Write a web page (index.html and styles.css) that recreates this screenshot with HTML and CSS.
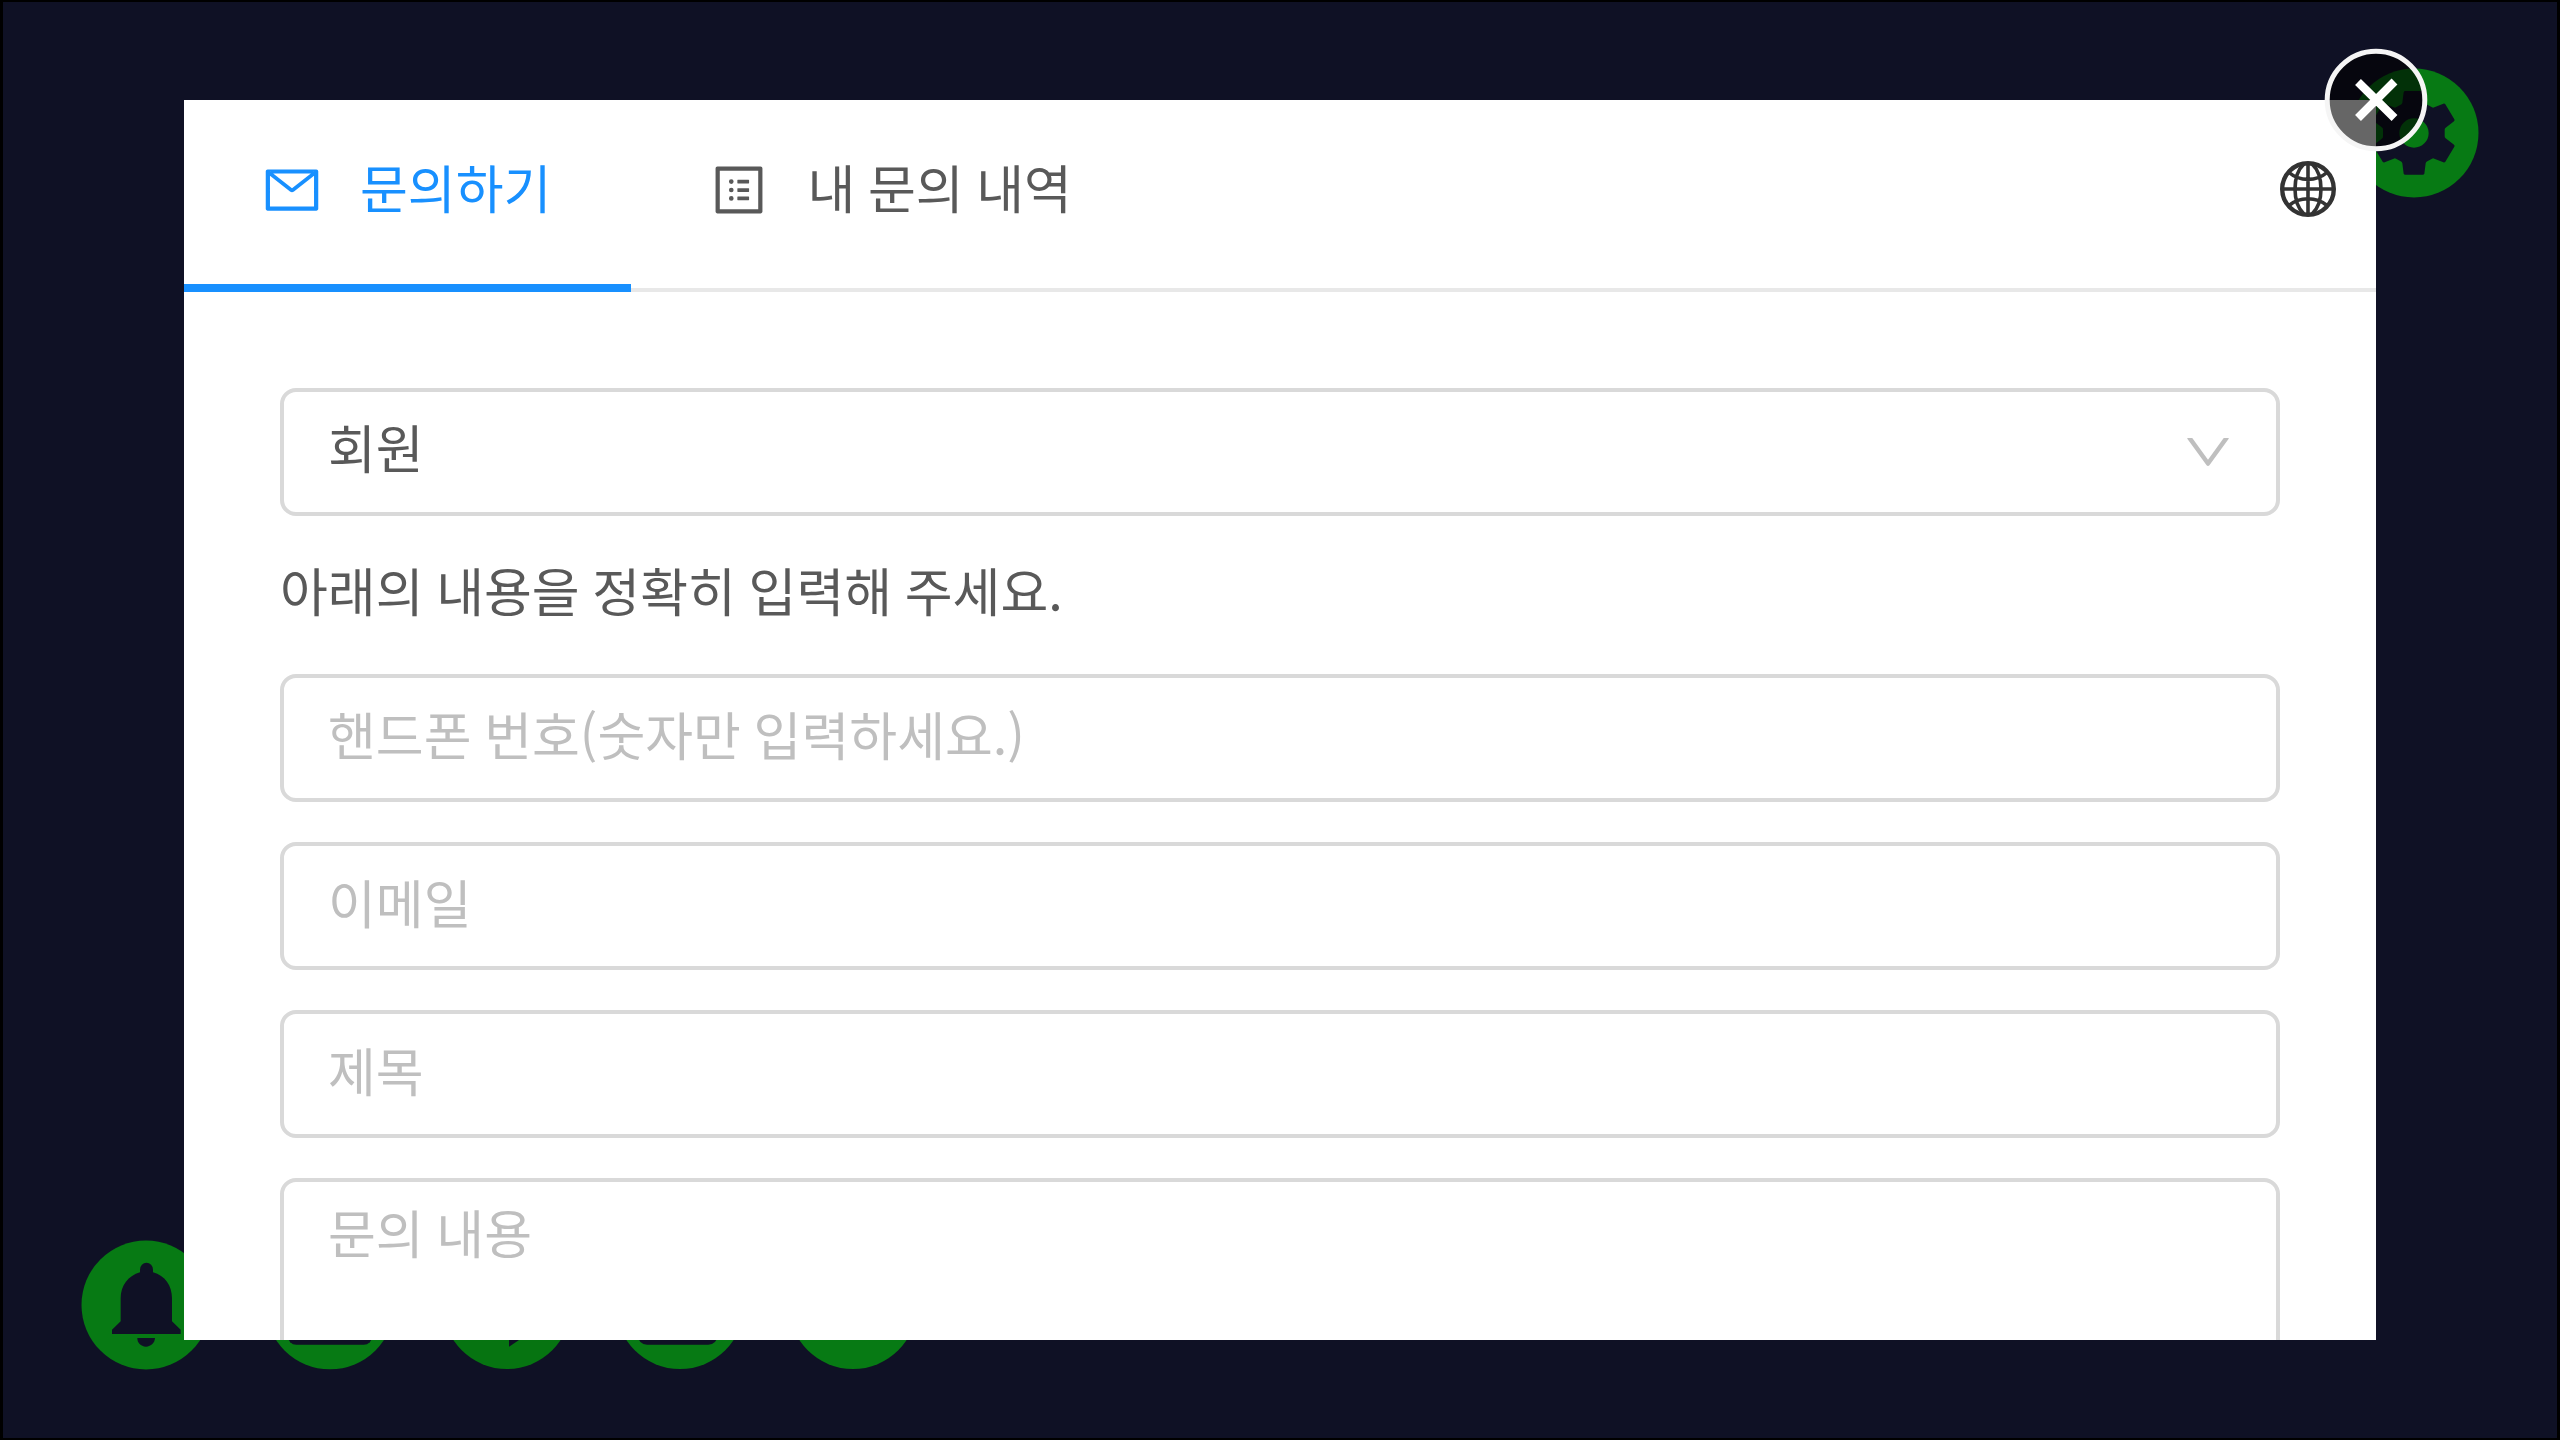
FILE: index.html
```html
<!DOCTYPE html>
<html lang="ko">
<head>
<meta charset="utf-8">
<title>문의하기</title>
<link rel="stylesheet" href="styles.css">
</head>
<body>
<div class="screen">
  <div class="hud">
    <svg class="hud-icon hud-settings" viewBox="-192 -192 384 384">
      <circle class="disc" r="193.500"/>
      <path class="glyph" fill-rule="evenodd" d="M-26-126H26Q30-126 31-122L35-91Q36-87 40-85L54-77Q57-75 61-77L88-88Q92-89 94-86L121-41Q123-38 120-35L95-16Q92-14 92-10V10Q92 14 95 16L120 35Q123 38 121 41L94 86Q92 89 88 88L61 77Q57 75 54 77L40 85Q36 87 35 91L31 122Q30 125 26 125H-26Q-30 125-31 122L-35 91Q-36 87-40 85L-54 77Q-57 75-61 77L-88 88Q-92 89-94 86L-121 41Q-123 38-120 35L-95 16Q-93 14-93 10V-10Q-93-14-95-16L-120-35Q-123-38-121-41L-94-86Q-92-89-88-88L-61-77Q-57-75-54-77L-40-85Q-36-87-35-91L-31-122Q-30-126-26-126ZM0-44A44 44 0 1 0 0 44A44 44 0 1 0 0-44Z"/>
    </svg>
    <div class="dock">
      <svg class="hud-icon" viewBox="-192 -192 384 384">
        <circle class="disc" r="193.500"/>
        <path class="glyph" d="M-18-98V-106A19 20 0 0 1 21-106V-98C57-88 78-58 78-20V49L104 74V87H-102V74L-76 49V-20C-76-58-53-88-18-98ZM-26 99H27C26 114 16 124 0 125C-16 124-26 114-26 99Z"/>
      </svg>
      <svg class="hud-icon dock-second" viewBox="-192 -192 384 384">
        <circle class="disc" r="193"/>
        <rect class="glyph" x="-127" y="-80" width="254" height="199" rx="26"/>
      </svg>
      <svg class="hud-icon dock-third" viewBox="-192 -192 384 384">
        <circle class="disc disc-dark" r="192"/>
        <path class="glyph" d="M6 60V125L75 79V60Z"/>
      </svg>
      <svg class="hud-icon dock-fourth" viewBox="-192 -192 384 384">
        <circle class="disc" r="192"/>
        <rect class="glyph" x="-127" y="-80" width="240" height="199" rx="28"/>
      </svg>
      <svg class="hud-icon dock-fifth" viewBox="-192 -192 384 384">
        <circle class="disc" r="192"/>
      </svg>
    </div>
  </div>

  <div class="modal">
    <header class="tabs">
      <div class="tab tab-active">
        <svg class="tab-icon" viewBox="0 0 1024 1024"><path d="M928 160H96c-17.700 0-32 14.300-32 32v640c0 17.700 14.300 32 32 32h832c17.700 0 32-14.300 32-32V192c0-17.700-14.300-32-32-32zm-40 110.800V792H136V270.800l-27.600-21.500 39.300-50.500 42.800 33.300h643.100l42.800-33.300 39.300 50.500-27.700 21.500zM833.600 232L512 482 190.400 232l-42.800-33.300-39.300 50.500 27.600 21.500 341.600 265.600a55.990 55.990 0 0 0 68.700 0L888 270.800l27.600-21.500-39.300-50.500-42.700 33.200z"/></svg>
        <span>문의하기</span>
      </div>
      <div class="tab">
        <svg class="tab-icon" viewBox="0 0 1024 1024"><path d="M880 112H144c-17.700 0-32 14.300-32 32v736c0 17.700 14.300 32 32 32h736c17.700 0 32-14.300 32-32V144c0-17.700-14.300-32-32-32zm-40 728H184V184h656v656zM492 400h184c4.400 0 8-3.600 8-8v-48c0-4.400-3.600-8-8-8H492c-4.400 0-8 3.600-8 8v48c0 4.400 3.600 8 8 8zm0 144h184c4.400 0 8-3.600 8-8v-48c0-4.400-3.600-8-8-8H492c-4.400 0-8 3.600-8 8v48c0 4.400 3.600 8 8 8zm0 144h184c4.400 0 8-3.600 8-8v-48c0-4.400-3.600-8-8-8H492c-4.400 0-8 3.600-8 8v48c0 4.400 3.600 8 8 8zM340 368a40 40 0 1 0 80 0 40 40 0 1 0-80 0zm0 144a40 40 0 1 0 80 0 40 40 0 1 0-80 0zm0 144a40 40 0 1 0 80 0 40 40 0 1 0-80 0z"/></svg>
        <span>내 문의 내역</span>
      </div>
      <svg class="globe" viewBox="0 0 56 56">
        <circle class="globe-rim" cx="28" cy="28" r="25.800"/>
        <path d="M28 2V54M2 28H54M9 11.500Q17 18.400 28 18.400T47 11.500M9 44.500Q17 37.800 28 37.800T47 44.500M24 3C12 14 12 42 24 53M32 3C44 14 44 42 32 53"/>
      </svg>
    </header>

    <main class="form">
      <div class="field select">
        <span>회원</span>
        <svg class="chevron" viewBox="0 0 1024 1024"><path d="M884 256h-75c-5.100 0-9.900 2.500-12.900 6.600L512 654.200 227.900 262.600c-3-4.100-7.800-6.600-12.900-6.600h-75c-6.500 0-10.300 7.400-6.500 12.700l352.600 486.100c12.800 17.600 39 17.600 51.700 0l352.600-486.100c3.900-5.300.1-12.700-6.400-12.700z"/></svg>
      </div>
      <p class="hint">아래의 내용을 정확히 입력해 주세요.</p>
      <div class="field placeholder"><span>핸드폰 번호(숫자만 입력하세요.)</span></div>
      <div class="field placeholder"><span>이메일</span></div>
      <div class="field placeholder"><span>제목</span></div>
      <div class="field placeholder textarea"><span>문의 내용</span></div>
    </main>
  </div>

  <svg class="close" viewBox="-52 -52 104 104">
    <circle class="close-disc" r="48.800"/>
    <path class="close-cross" d="M-18-18L18.500 18M18.500-18.500L-18 18"/>
  </svg>
</div>
</body>
</html>
```

FILE: styles.css
```css
* {
  box-sizing: border-box;
}

body {
  margin: 0;
  background: #000;
  font-family: "Noto Sans CJK KR", sans-serif;
  font-size: 52px;
  line-height: 78px;
  word-spacing: -1.900px;
  color: #595959;
}

.screen {
  position: relative;
  width: 2560px;
  height: 1440px;
  border: solid #000;
  border-width: 2px 3px;
  background: #0f1125;
  overflow: hidden;
}

.hud {
  display: flex;
  flex-direction: column;
  justify-content: space-between;
  height: 100%;
  padding: 67.300px 79.300px 69px 79.300px;
}

.hud-icon {
  display: block;
  flex: none;
  width: 128px;
  height: 128px;
  overflow: visible;
}

.hud-settings {
  align-self: flex-end;
}

.dock {
  display: flex;
}

.dock-second {
  margin-left: 56px;
}

.dock-third {
  margin-left: 48.300px;
}

.dock-fourth,
.dock-fifth {
  margin-left: 45.300px;
}

.disc {
  fill: #077a14;
}

.disc-dark {
  fill: #067411;
}

.glyph {
  fill: #0f1125;
}

.modal {
  position: absolute;
  top: 98px;
  left: 181px;
  display: flex;
  flex-direction: column;
  width: 2192px;
  height: 1240px;
  background: #fff;
  overflow: hidden;
}

.tabs {
  display: flex;
  flex: none;
  height: 192px;
  box-shadow: inset 0 -4px #e8e8e8;
}

.tab {
  display: flex;
  align-items: center;
  gap: 38px;
  padding: 0 80px 12px 78px;
  white-space: nowrap;
}

.tab span {
  margin-top: -7px;
}

.tab-active {
  color: #1890ff;
  box-shadow: inset 0 -8px #1890ff;
}

.tab-icon {
  width: 60px;
  height: 60px;
  fill: currentColor;
}

.globe {
  width: 56px;
  height: 56px;
  margin: 61px 40px 0 auto;
  fill: none;
  stroke: #333;
  stroke-width: 3.600;
}

.globe-rim {
  stroke-width: 4.400;
}

.form {
  display: flex;
  flex-direction: column;
  gap: 40px;
  padding: 96px 96px 0;
}

.field {
  display: flex;
  flex: none;
  align-items: flex-start;
  justify-content: space-between;
  height: 128px;
  padding: 17px 40px 0 44px;
  border: 4px solid #d9d9d9;
  border-radius: 16px;
}

.select {
  padding-top: 16px;
}

.placeholder {
  color: #bfbfbf;
}

.textarea {
  height: 400px;
  padding-top: 11px;
}

.chevron {
  width: 56px;
  height: 56px;
  margin-top: 16px;
  fill: #bfbfbf;
}

.hint {
  margin: -5px 0 5px;
}

.close {
  position: absolute;
  top: 46px;
  left: 2321px;
  width: 104px;
  height: 104px;
}

.close-disc {
  fill: rgba(0, 0, 0, 0.6);
  stroke: #f5f5f5;
  stroke-width: 5;
}

.close-cross {
  fill: none;
  stroke: #fff;
  stroke-width: 8.300;
}
```
